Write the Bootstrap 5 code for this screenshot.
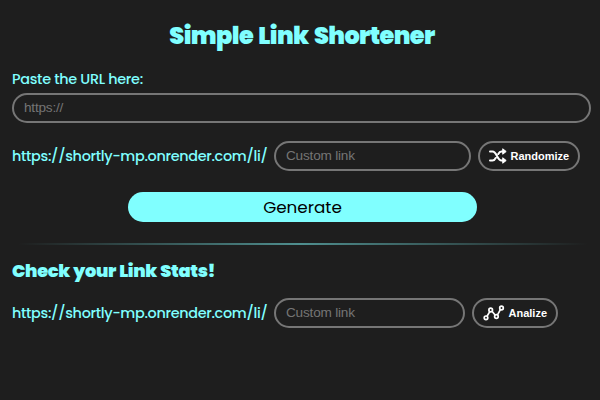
<!DOCTYPE html>
<html lang="en">
<head>
<meta charset="utf-8">
<meta name="viewport" content="width=device-width, initial-scale=1">
<title>Simple Link Shortener</title>
<link href="https://cdn.jsdelivr.net/npm/bootstrap@5.3.0/dist/css/bootstrap.min.css" rel="stylesheet">
<style>
body{background:#1e1e1e;color:#80ffff;font-family:Poppins,Inter,sans-serif;font-feature-settings:"cv11","ss03";overflow:hidden}
.page{padding:21px 9px 0 12px}
.title{font-size:24px;line-height:30px;font-weight:900;letter-spacing:-.6px;word-spacing:1.700px;margin-bottom:18px;padding-left:1px}
.caption{font-size:14.400px;line-height:21px;font-weight:500;letter-spacing:-.3px;margin-bottom:3px}
.pill{height:30px;border:2px solid #767676;border-radius:15px;background:transparent;font-family:"Liberation Sans",Arial,sans-serif}
.pill.form-control{font-size:13.600px;letter-spacing:-.2px;padding:0 9px 1px 10px;color:#fff;background:transparent}
.pill.form-control::placeholder{color:#757575;opacity:1}
.pill.btn{font-size:11px;line-height:1;font-weight:700;color:#fff;padding:0 9px 0 9px;margin-left:6.500px}
.prefix{width:262px;font-size:14.400px;line-height:30px;font-weight:500;letter-spacing:-.32px;white-space:nowrap}
.alias{width:197px}
.alias-stats{width:191px}
.link-row{margin-top:18px}
.go{width:349px;height:30px;border:0;border-radius:15px;background:#80ffff;color:#000;font-size:16.800px;line-height:30px;padding:0;margin:21px 0 21px 116px}
.rule{height:2px;margin-right:-9px;margin-left:-12px;background:linear-gradient(90deg,transparent 3%,#80ffff80 50%,transparent 98%)}
.subtitle{font-size:17.800px;line-height:24px;font-weight:900;letter-spacing:-.32px;word-spacing:.5px;margin:14px 0 15px}
</style>
</head>
<body>
<main class="page">
  <h1 class="title text-center">Simple Link Shortener</h1>
  <label class="caption d-block" for="url">Paste the URL here:</label>
  <input class="form-control pill" id="url" placeholder="https://">
  <div class="d-flex align-items-center link-row">
    <span class="prefix">https://shortly-mp.onrender.com/li/</span>
    <input class="form-control pill alias" placeholder="Custom link" aria-label="Custom link">
    <button class="btn pill d-flex align-items-center" type="button">
      <svg width="18" height="16" viewBox="0 0 18 16" fill="none" stroke="#fff" stroke-width="2" stroke-linecap="round" stroke-linejoin="round"><path d="M1 3.500h2.500c4.500 0 4.500 9 9 9H15M1 12.500h2.500c1.600 0 2.500-1.100 3.200-2.500M9.300 6c.7-1.400 1.600-2.500 3.200-2.500H15"/><path d="M14 1l3.200 2.500L14 6zM14 10l3.200 2.500-3.200 2.500z" fill="#fff" stroke-width="1"/></svg>
      <span class="ms-1">Randomize</span>
    </button>
  </div>
  <button class="btn go d-block" type="button">Generate</button>
  <div class="rule"></div>
  <h2 class="subtitle">Check your Link Stats!</h2>
  <div class="d-flex align-items-center">
    <span class="prefix">https://shortly-mp.onrender.com/li/</span>
    <input class="form-control pill alias-stats" placeholder="Custom link" aria-label="Custom link for stats">
    <button class="btn pill d-flex align-items-center" type="button">
      <svg width="22" height="16" viewBox="0 0 22 16" fill="none" stroke="#fff" stroke-width="1.700"><path d="M4 11.200L6.800 6.600M9 6.300l3.300 4M14.500 9.800l3-5.400"/><circle cx="3" cy="12.800" r="1.800"/><circle cx="7.700" cy="5" r="1.800"/><circle cx="13.400" cy="11.500" r="1.800"/><circle cx="18.500" cy="3" r="1.800"/></svg>
      <span class="ms-1">Analize</span>
    </button>
  </div>
</main>
<script src="https://cdn.jsdelivr.net/npm/bootstrap@5.3.0/dist/js/bootstrap.bundle.min.js"></script>
</body>
</html>
